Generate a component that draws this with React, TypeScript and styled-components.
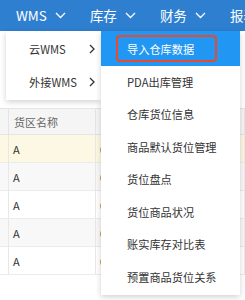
import React from "react";
import styled, { createGlobalStyle } from "styled-components";

const GlobalStyle = createGlobalStyle`
  html, body {
    margin: 0;
    padding: 0;
    background: #ffffff;
    font-family: "Noto Sans CJK SC", "Noto Sans", sans-serif;
    overflow: hidden;
  }
`;

const Page = styled.div`
  position: relative;
  width: 245px;
  height: 300px;
  overflow: hidden;
  background: #ffffff;
`;

const TopBar = styled.div`
  height: 31px;
  background: #2e7fd0;
  display: flex;
  align-items: center;
  padding-left: 4px;
  white-space: nowrap;
`;

const NavItem = styled.div`
  display: flex;
  align-items: center;
  gap: 8px;
  padding: 0 12px;
  color: #ffffff;
  font-size: 13.5px;
  line-height: 31px;
`;

const Content = styled.div`
  padding-top: 77px;
`;

const Table = styled.div`
  display: grid;
  grid-template-columns: 9px 87px 1fr;
`;

const HeadCell = styled.div`
  height: 27px;
  box-sizing: border-box;
  background: #f5f5f5;
  border-top: 1px solid #e4e4e4;
  border-bottom: 1px solid #e4e4e4;
  border-right: 1px solid #e4e4e4;
  color: #666666;
  font-size: 11px;
  display: flex;
  align-items: center;
  padding-left: 5px;
  white-space: nowrap;
`;

const Cell = styled.div<{ $bg: string }>`
  height: 28px;
  box-sizing: border-box;
  background: ${({ $bg }) => $bg};
  border-bottom: 1px solid #ebebeb;
  border-right: 1px solid #e8e8e8;
  color: #333333;
  font-size: 11px;
  display: flex;
  align-items: center;
  padding-left: 4px;
  white-space: nowrap;
`;

const Menu = styled.div<{ $left: number; $width: number }>`
  position: absolute;
  top: 31px;
  left: ${({ $left }) => $left}px;
  width: ${({ $width }) => $width}px;
  background: #ffffff;
  box-shadow: 0 2px 6px rgba(0, 0, 0, 0.18);
  padding: 2px 0;
`;

const MenuItem = styled.div<{ $active?: boolean; $pad: number }>`
  position: relative;
  height: 32.5px;
  display: flex;
  align-items: center;
  justify-content: space-between;
  padding: 0 6px 0 ${({ $pad }) => $pad}px;
  font-size: 11.2px;
  color: ${({ $active }) => ($active ? "#ffffff" : "#333333")};
  background: ${({ $active }) => ($active ? "#2196f3" : "transparent")};
  white-space: nowrap;
`;

const ActiveItem = styled(MenuItem)`
  margin-top: -2px;
  height: 34.5px;
  padding-top: 2px;
  box-sizing: border-box;
`;

const Marker = styled.div`
  position: absolute;
  left: 15px;
  top: 4px;
  width: 101px;
  height: 27px;
  box-sizing: border-box;
  border: 2px solid #ea4a2c;
  border-radius: 4px;
`;

const ChevronDown = () => (
  <svg width="11" height="7" viewBox="0 0 11 7">
    <polyline points="1,1 5.5,5.5 10,1" fill="none" stroke="#ffffff" strokeWidth="1.3" />
  </svg>
);

const ChevronRight = () => (
  <svg width="6" height="10" viewBox="0 0 6 10">
    <polyline points="1,1 5,5 1,9" fill="none" stroke="#333333" strokeWidth="1.3" />
  </svg>
);

const navs = ["WMS", "库存", "财务", "报表"];

const subItems = [
  "PDA出库管理",
  "仓库货位信息",
  "商品默认货位管理",
  "货位盘点",
  "货位商品状况",
  "账实库存对比表",
  "预置商品货位关系",
];

const rowColors = ["#fdf8e4", "#f8f8f8", "#ffffff", "#f8f8f8", "#ffffff"];

const App = () => {
  return (
    <Page>
      <GlobalStyle />
      <TopBar>
        {navs.map((n) => (
          <NavItem key={n}>
            {n}
            <ChevronDown />
          </NavItem>
        ))}
      </TopBar>
      <Content>
        <Table>
          <HeadCell />
          <HeadCell>货区名称</HeadCell>
          <HeadCell>货位编码</HeadCell>
          {rowColors.map((bg, i) => (
            <React.Fragment key={i}>
              <Cell $bg={bg} />
              <Cell $bg={bg}>A</Cell>
              <Cell $bg={bg}>0{i + 1}</Cell>
            </React.Fragment>
          ))}
        </Table>
      </Content>
      <Menu $left={6} $width={95}>
        <MenuItem $pad={23}>
          云WMS
          <ChevronRight />
        </MenuItem>
        <MenuItem $pad={23}>
          外接WMS
          <ChevronRight />
        </MenuItem>
      </Menu>
      <Menu $left={101} $width={139}>
        <ActiveItem $active $pad={26}>
          导入仓库数据
          <Marker />
        </ActiveItem>
        {subItems.map((s) => (
          <MenuItem key={s} $pad={26}>
            {s}
          </MenuItem>
        ))}
      </Menu>
    </Page>
  );
};

export default App;
